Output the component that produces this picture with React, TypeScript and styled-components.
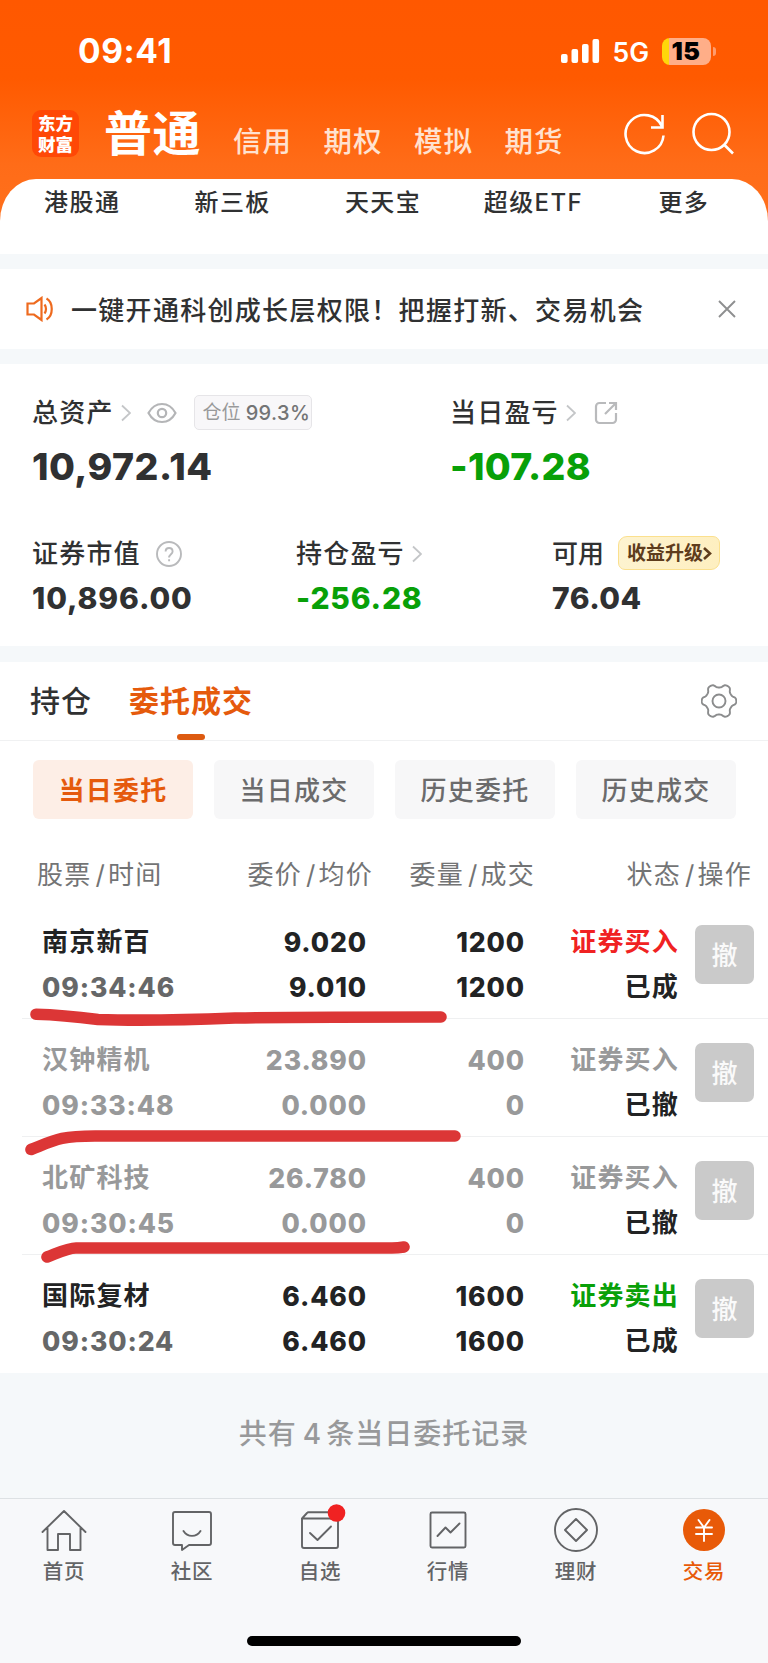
import React from "react";
import styled, { createGlobalStyle } from "styled-components";

const GlobalStyle = createGlobalStyle`
  * { box-sizing: border-box; }
  body {
    margin: 0;
    background: #f6f8fa;
    font-family: Inter, "Noto Sans CJK SC", sans-serif;
    color: #303132;
  }
`;

const Screen = styled.div`
  position: relative;
  width: 768px;
  height: 1663px;
  overflow: hidden;
  display: flex;
  flex-direction: column;
  background: #f5f8fa;
`;

const Text = styled.span<{
  $size: number;
  $ls?: number;
  $weight?: number;
  $color?: string;
}>`
  display: block;
  white-space: nowrap;
  font-size: ${(p) => p.$size}px;
  line-height: ${(p) => Math.round(p.$size * 1.2)}px;
  letter-spacing: ${(p) => p.$ls ?? 0}px;
  font-weight: ${(p) => p.$weight ?? 500};
  color: ${(p) => p.$color ?? "inherit"};
`;

/* ---------- header ---------- */

const Top = styled.header`
  height: 254px;
  display: flex;
  flex-direction: column;
  background: linear-gradient(#ff5800 0, #ff5a00 78px, #ff6c18 165px, #ff701c 220px);
`;

const StatusBar = styled.div`
  height: 102px;
  padding: 0 57px 0 78px;
  display: flex;
  align-items: center;
`;

const StatusRight = styled.div`
  margin-left: auto;
  display: flex;
  align-items: center;
  color: #fff;
`;

const Network = styled(Text)`
  margin: 2px 0 0 12px;
`;

const Battery = styled.div`
  position: relative;
  width: 49px;
  height: 27px;
  margin-left: 13px;
  padding-right: 1px;
  border-radius: 8px;
  display: flex;
  align-items: center;
  justify-content: center;
  background: linear-gradient(90deg, #ffd60a 7px, #ffae88 7px);
  &::after {
    content: "";
    position: absolute;
    right: -5px;
    top: 9px;
    width: 3px;
    height: 9px;
    border-radius: 0 3px 3px 0;
    background: #ff9c6c;
  }
`;

const Nav = styled.nav`
  height: 77px;
  padding: 8px 34px 0 32px;
  display: flex;
  align-items: flex-start;
`;

const Logo = styled.div`
  width: 47px;
  height: 47px;
  border-radius: 9px;
  background: #ff4806;
  color: #fff;
  display: flex;
  flex-direction: column;
  align-items: center;
  justify-content: center;
`;

const NavTitle = styled(Text)`
  margin: -5px 0 0 25px;
`;

const NavLinks = styled.div`
  display: flex;
  gap: 31.5px;
  margin: 15px 0 0 32px;
`;

const NavIcons = styled.div`
  margin-left: auto;
  display: flex;
  gap: 26px;
`;

const QuickLinks = styled.div`
  height: 75px;
  padding: 9px 9px 0 7px;
  border-radius: 36px 36px 0 0 / 42px 42px 0 0;
  background: #fff;
  display: grid;
  grid-template-columns: repeat(5, 1fr);
  justify-items: center;
`;

/* ---------- notice ---------- */

const Notice = styled.section`
  height: 80px;
  margin-top: 15px;
  padding: 0 32px 0 26px;
  display: flex;
  align-items: center;
  background: #fff;
`;

const NoticeText = styled(Text)`
  margin: 2px auto 0 17px;
`;

/* ---------- assets ---------- */

const Assets = styled.section`
  height: 282px;
  margin-top: 15px;
  padding: 30px 32px 0;
  background: #fff;
`;

const AssetRow = styled.div<{ $columns: string; $top?: number }>`
  display: grid;
  grid-template-columns: ${(p) => p.$columns};
  margin-top: ${(p) => p.$top ?? 0}px;
`;

const LabelRow = styled.div`
  height: 37px;
  display: flex;
  align-items: center;
`;

const Chev = styled.svg`
  width: 10px;
  height: 18px;
  margin-left: 7px;
  fill: none;
  stroke: #c4c6c8;
  stroke-width: 1.8;
`;

const Eye = styled.svg`
  margin-left: 16px;
`;

const Share = styled.svg`
  margin-left: 18px;
`;

const Help = styled.svg`
  margin-left: 15px;
`;

const BigValue = styled(Text)`
  margin-top: 13px;
`;

const MidValue = styled(Text)`
  margin-top: 8px;
`;

const Position = styled.div`
  width: 118px;
  height: 35px;
  margin-left: 17px;
  padding-left: 8px;
  display: flex;
  align-items: center;
  gap: 5px;
  border: 1.5px solid #e6e5e8;
  border-radius: 5px;
  background: #f8f7f9;
`;

const Upgrade = styled.div`
  width: 102px;
  height: 34px;
  margin: -1px 0 0 14px;
  padding-left: 8px;
  display: flex;
  align-items: center;
  border: 1.5px solid #fbe08e;
  border-radius: 9px 7px 9px 7px;
  background: linear-gradient(100deg, #fdf3d0, #feefc0);
`;

/* ---------- orders ---------- */

const Orders = styled.section`
  height: 711px;
  margin-top: 16px;
  background: #fff;
`;

const Tabs = styled.div`
  height: 79px;
  padding: 0 31px 0 30px;
  display: flex;
  align-items: center;
  border-bottom: 1px solid #f0f1f2;
`;

const Tab = styled.div<{ $active?: boolean }>`
  position: relative;
  margin-right: 37px;
  color: ${(p) => (p.$active ? "#e55a0c" : "#303132")};
  &::after {
    content: "";
    display: ${(p) => (p.$active ? "block" : "none")};
    position: absolute;
    left: 48px;
    bottom: -21px;
    width: 28px;
    height: 6px;
    border-radius: 3px;
    background: #dd5a10;
  }
`;

const TabSpacer = styled.div`
  flex: 1;
`;

const Chips = styled.div`
  display: grid;
  grid-template-columns: repeat(4, 1fr);
  gap: 21px;
  padding: 19px 32px 0 33px;
`;

const Chip = styled.div<{ $active?: boolean }>`
  height: 59px;
  padding-top: 2px;
  display: flex;
  align-items: center;
  justify-content: center;
  border-radius: 6px;
  background: ${(p) => (p.$active ? "#fdeee6" : "#f7f7f8")};
  color: ${(p) => (p.$active ? "#e55a0c" : "#6b6b6c")};
`;

const TableHead = styled.div`
  height: 82px;
  padding: 40px 16px 0 37px;
  display: grid;
  grid-template-columns: 154px 182px 162px 1fr;
  color: #737475;
`;

const HeadCell = styled.div<{ $right?: boolean }>`
  display: flex;
  justify-content: ${(p) => (p.$right ? "flex-end" : "flex-start")};
`;

const Slash = styled.span`
  margin: 0 2px 0 4px;
`;

const Row = styled.div`
  height: 118px;
  margin-left: 22px;
  padding: 23px 14px 0 20px;
  display: grid;
  grid-template-columns: 158px 167px 158px 154px 1fr;
  border-bottom: 1px solid #eff0f1;
  &:last-child { border-bottom: 0; }
`;

const Cell = styled.div<{ $right?: boolean }>`
  display: flex;
  flex-direction: column;
  gap: 9px;
  align-items: ${(p) => (p.$right ? "flex-end" : "flex-start")};
`;

const CellText = styled(Text)`
  line-height: 36px;
`;

const CellNumber = styled(CellText)`
  font-size: 26.5px;
  font-weight: 800;
  letter-spacing: 0.9px;
`;

const Cancel = styled.div`
  width: 59px;
  height: 59px;
  margin-top: 1px;
  padding-top: 2px;
  justify-self: end;
  display: flex;
  align-items: center;
  justify-content: center;
  border-radius: 7px;
  background: #cacaca;
  color: #fafafa;
`;

const Summary = styled.div`
  height: 125px;
  padding-bottom: 3px;
  display: flex;
  align-items: center;
  justify-content: center;
`;

const Count = styled.span`
  margin: 0 4px 0 6px;
`;

/* ---------- bottom bar ---------- */

const BottomBar = styled.footer`
  flex: 1;
  border-top: 1px solid #dde1e4;
  background: #f7f8fa;
`;

const BarItems = styled.div`
  display: grid;
  grid-template-columns: repeat(6, 1fr);
`;

const BarItem = styled.div<{ $active?: boolean }>`
  padding-top: 8px;
  display: flex;
  flex-direction: column;
  align-items: center;
  gap: 6px;
  color: ${(p) => (p.$active ? "#e85a08" : "#636466")};
`;

const BarIcon = styled.svg`
  width: 48px;
  height: 46px;
  overflow: visible;
  fill: none;
  stroke: currentColor;
  stroke-width: 1.9;
  stroke-linejoin: round;
  stroke-linecap: round;
`;

const HomeIndicator = styled.div`
  width: 274px;
  height: 10px;
  margin: 52px auto 0;
  border-radius: 5px;
  background: #000;
`;

const Markup = styled.svg`
  position: absolute;
  left: 0;
  top: 1000px;
  fill: none;
  stroke: #dc3636;
  stroke-width: 11.6;
  stroke-linecap: round;
  stroke-linejoin: round;
  pointer-events: none;
`;

const Chevron = () => (
  <Chev viewBox="0 0 10 18">
    <path d="M1 1.5 9 9 1 16.5" />
  </Chev>
);

/* Outline of the settings cog: a circle with six soft lobes. */
const cogPoints = Array.from({ length: 120 }, (_, i) => {
  const a = (i / 120) * Math.PI * 2;
  const wave = Math.cos(6 * a);
  const r = 15.4 + 2 * Math.tanh(1.6 * wave);
  return `${(18 + r * Math.cos(a)).toFixed(2)},${(18 + r * Math.sin(a)).toFixed(2)}`;
}).join(" ");

const grey = "#98999a";
const ink = "#222324";

const orders = [
  { name: "南京新百", time: "09:34:46", price: "9.020", avg: "9.010", qty: "1200", done: "1200", side: "证券买入", sideColor: "#f02222", state: "已成", live: true },
  { name: "汉钟精机", time: "09:33:48", price: "23.890", avg: "0.000", qty: "400", done: "0", side: "证券买入", sideColor: grey, state: "已撤", live: false },
  { name: "北矿科技", time: "09:30:45", price: "26.780", avg: "0.000", qty: "400", done: "0", side: "证券买入", sideColor: grey, state: "已撤", live: false },
  { name: "国际复材", time: "09:30:24", price: "6.460", avg: "6.460", qty: "1600", done: "1600", side: "证券卖出", sideColor: "#08a008", state: "已成", live: true },
];

const heads = [
  ["股票", "时间"],
  ["委价", "均价"],
  ["委量", "成交"],
  ["状态", "操作"],
];

const barItems = [
  { label: "首页", icon: <path d="M2.500 25 24 4 45.500 25M7.500 21V43H18V27H30V43H40.500V21" /> },
  { label: "社区", icon: <path d="M7 5h34a2 2 0 0 1 2 2v29a2 2 0 0 1-2 2H21l-7 5v-5H7a2 2 0 0 1-2-2V7a2 2 0 0 1 2-2ZM15.500 24c4 6.500 13 6.500 17 0" /> },
  { label: "自选", icon: <><path d="M6 11.500h36V39a2 2 0 0 1-2 2H8a2 2 0 0 1-2-2V11.500ZM6 11.500 11 6q.6-.7 1.500-.7H39l3 6.200" /><path d="M14 26l7.500 7L35 19.500" /><circle cx="40.500" cy="6" r="8.800" fill="#f02222" stroke="none" /></> },
  { label: "行情", icon: <><rect x="6.500" y="5.500" width="35" height="35" rx="1.500" /><path d="M13.500 29l8-8.500 5 5 9-9" /></> },
  { label: "理财", icon: <><circle cx="24" cy="23" r="21" /><path d="M24 12 35 23 24 34 13 23Z" /></> },
  { label: "交易", active: true, icon: <><circle cx="24" cy="23" r="21" fill="#e85a08" stroke="none" /><path stroke="#fff" d="M18.500 13 24 20.500 29.500 13M24 20.500V34M16 20.500H32M16 27H32" /></> },
];

export default function App() {
  return (
    <Screen>
      <GlobalStyle />
      <Top>
        <StatusBar>
          <Text $size={33.5} $weight={700} $ls={0.6} $color="#fff">09:41</Text>
          <StatusRight>
            <svg width="39" height="24" fill="#fff">
              <rect x="0" y="15" width="6.600" height="9" rx="2" />
              <rect x="10.500" y="10" width="6.600" height="14" rx="2" />
              <rect x="21" y="5" width="6.600" height="19" rx="2" />
              <rect x="31.500" y="0" width="6.600" height="24" rx="2" />
            </svg>
            <Network $size={26.5} $weight={600} $color="#fff">5G</Network>
            <Battery>
              <Text $size={25} $weight={900} $ls={0.5} $color="#000">15</Text>
            </Battery>
          </StatusRight>
        </StatusBar>
        <Nav>
          <Logo>
            <Text $size={17.5} $weight={900}>东方</Text>
            <Text $size={17.5} $weight={900}>财富</Text>
          </Logo>
          <NavTitle $size={48} $weight={700} $ls={0.5} $color="#fff">普通</NavTitle>
          <NavLinks>
            {["信用", "期权", "模拟", "期货"].map((t) => (
              <Text key={t} $size={28.5} $ls={1} $weight={500} $color="#ffe2d0">{t}</Text>
            ))}
          </NavLinks>
          <NavIcons>
            <svg width="42" height="48" fill="none" stroke="#fff" strokeWidth="2.600">
              <path d="M39.500 25.500A19 19 0 1 1 38 16.500M38.500 5V17.500H27" />
            </svg>
            <svg width="42" height="48" fill="none" stroke="#fff" strokeWidth="2.600">
              <circle cx="19.500" cy="22" r="18" />
              <path d="M32 34.500 41 43.500" />
            </svg>
          </NavIcons>
        </Nav>
        <QuickLinks>
          {["港股通", "新三板", "天天宝", "超级ETF", "更多"].map((t) => (
            <Text key={t} $size={24} $ls={1.4}>{t}</Text>
          ))}
        </QuickLinks>
      </Top>

      <Notice>
        <svg width="28" height="26" fill="none" stroke="#ee6a1e" strokeWidth="2.200">
          <path d="M1.500 7.500H8L15.500 2V24L8 18.500H1.500Z" />
          <path d="M18.500 8.500c2 2.500 2 6.500 0 9M20.500 2.500c7 4 7 17 0 21" />
        </svg>
        <NoticeText $size={26} $ls={1.3}>一键开通科创成长层权限！把握打新、交易机会</NoticeText>
        <svg width="18" height="18" stroke="#8e8f90" strokeWidth="1.900">
          <path d="M1 1 17 17M17 1 1 17" />
        </svg>
      </Notice>

      <Assets>
        <AssetRow $columns="418px 1fr">
          <div>
            <LabelRow>
              <Text $size={26} $ls={1.2}>总资产</Text>
              <Chevron />
              <Eye width="30" height="22" fill="none" stroke="#b4b5b7" strokeWidth="2.200">
                <path d="M1.500 11C8-1 22-1 28.500 11 22 23 8 23 1.500 11Z" />
                <circle cx="15" cy="11" r="4.200" />
              </Eye>
              <Position>
                <Text $size={19} $color="#98999a" $weight={400}>仓位</Text>
                <Text $size={20} $color="#737475" $ls={0.4}>99.3%</Text>
              </Position>
            </LabelRow>
            <BigValue $size={37.5} $ls={0.5} $weight={800}>10,972.14</BigValue>
          </div>
          <div>
            <LabelRow>
              <Text $size={26} $ls={1.2}>当日盈亏</Text>
              <Chevron />
              <Share width="24" height="24" fill="none" stroke="#b9babc" strokeWidth="2.200">
                <path d="M12 2H5.500a3.500 3.500 0 0 0-3.500 3.500V18.500a3.500 3.500 0 0 0 3.500 3.500H18.500a3.500 3.500 0 0 0 3.500-3.500V12M15 2H22V9M22 2 11 13" />
              </Share>
            </LabelRow>
            <BigValue $size={37.5} $ls={0.3} $weight={800} $color="#08a008">-107.28</BigValue>
          </div>
        </AssetRow>
        <AssetRow $columns="264px 256px 1fr" $top={46}>
          <div>
            <LabelRow>
              <Text $size={26} $ls={1.2}>证券市值</Text>
              <Help width="26" height="26" fill="none" stroke="#b9babc" strokeWidth="1.900">
                <circle cx="13" cy="13" r="12" />
                <path d="M9.600 10.500c0-4.600 7-4.600 7 0 0 2.500-3.500 3-3.500 6M13.100 18.200v2" />
              </Help>
            </LabelRow>
            <MidValue $size={30} $ls={0.9} $weight={800}>10,896.00</MidValue>
          </div>
          <div>
            <LabelRow>
              <Text $size={26} $ls={1.2}>持仓盈亏</Text>
              <Chevron />
            </LabelRow>
            <MidValue $size={30} $ls={0.8} $weight={800} $color="#08a008">-256.28</MidValue>
          </div>
          <div>
            <LabelRow>
              <Text $size={26} $ls={0}>可用</Text>
              <Upgrade>
                <Text $size={19} $weight={700} $color="#5e3c1c">收益升级</Text>
                <svg width="9" height="15" fill="none" stroke="#5e3c1c" strokeWidth="2.600">
                  <path d="M1 2 7 7.500 1 13" />
                </svg>
              </Upgrade>
            </LabelRow>
            <MidValue $size={30} $ls={0.5} $weight={800}>76.04</MidValue>
          </div>
        </AssetRow>
      </Assets>

      <Orders>
        <Tabs>
          <Tab><Text $size={30} $ls={1}>持仓</Text></Tab>
          <Tab $active><Text $size={30} $ls={1} $weight={700}>委托成交</Text></Tab>
          <TabSpacer />
          <svg width="36" height="36" fill="none" stroke="#8b8c8d" strokeWidth="1.900" strokeLinejoin="round">
            <polygon points={cogPoints} />
            <circle cx="18" cy="18" r="6.500" />
          </svg>
        </Tabs>
        <Chips>
          <Chip $active><Text $size={26} $ls={1.2} $weight={700}>当日委托</Text></Chip>
          <Chip><Text $size={26} $ls={1.2}>当日成交</Text></Chip>
          <Chip><Text $size={26} $ls={1.2}>历史委托</Text></Chip>
          <Chip><Text $size={26} $ls={1.2}>历史成交</Text></Chip>
        </Chips>
        <TableHead>
          {heads.map(([a, b], i) => (
            <HeadCell key={a} $right={i > 0}>
              <Text $size={26} $ls={1.2} $weight={400}>{a}<Slash>/</Slash>{b}</Text>
            </HeadCell>
          ))}
        </TableHead>
        <div>
          {orders.map((o) => (
            <Row key={o.name}>
              <Cell>
                <CellText $size={26} $ls={1.2} $weight={700} $color={o.live ? ink : grey}>{o.name}</CellText>
                <CellNumber $size={26} $color={o.live ? "#666768" : grey}>{o.time}</CellNumber>
              </Cell>
              <Cell $right>
                <CellNumber $size={26} $color={o.live ? ink : grey}>{o.price}</CellNumber>
                <CellNumber $size={26} $color={o.live ? ink : grey}>{o.avg}</CellNumber>
              </Cell>
              <Cell $right>
                <CellNumber $size={26} $color={o.live ? ink : grey}>{o.qty}</CellNumber>
                <CellNumber $size={26} $color={o.live ? ink : grey}>{o.done}</CellNumber>
              </Cell>
              <Cell $right>
                <CellText $size={26} $ls={1.2} $weight={700} $color={o.sideColor}>{o.side}</CellText>
                <CellText $size={26} $ls={1.2} $weight={700} $color={ink}>{o.state}</CellText>
              </Cell>
              <Cancel><Text $size={26} $weight={500}>撤</Text></Cancel>
            </Row>
          ))}
        </div>
      </Orders>

      <Summary>
        <Text $size={28} $ls={1} $weight={500} $color="#98999a">共有<Count>4</Count>条当日委托记录</Text>
      </Summary>

      <BottomBar>
        <BarItems>
          {barItems.map((b) => (
            <BarItem key={b.label} $active={b.active}>
              <BarIcon viewBox="0 0 48 46">{b.icon}</BarIcon>
              <Text $size={20.5} $ls={0.8}>{b.label}</Text>
            </BarItem>
          ))}
        </BarItems>
        <HomeIndicator />
      </BottomBar>

      <Markup width="768" height="280">
        <path d="M36 14.300C60 15 78 17 98 19.500C140 21 185 20 235 18C300 17 380 17 441 17" />
        <path d="M31 149.500C55 140 60 136 95 136H455" />
        <path d="M47 257C60 252 68 248 76 248H392Q398 248 404 247" />
      </Markup>
    </Screen>
  );
}
